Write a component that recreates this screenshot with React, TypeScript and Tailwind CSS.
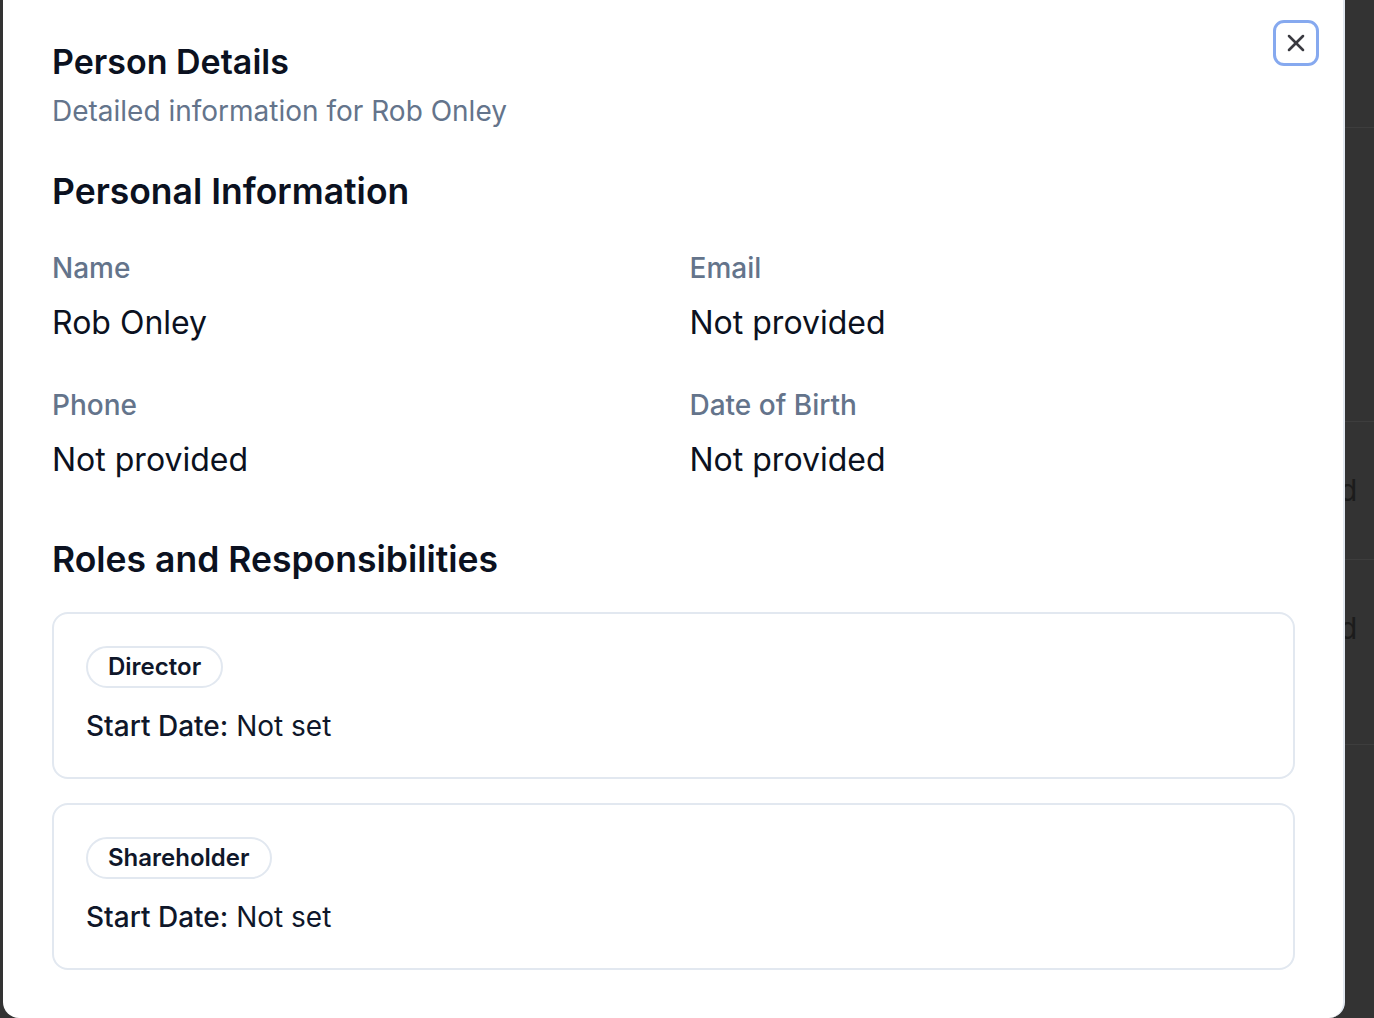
import React from 'react';
import { X } from 'lucide-react';

const info = [
  { label: 'Name', value: 'Rob Onley' },
  { label: 'Email', value: 'Not provided' },
  { label: 'Phone', value: 'Not provided' },
  { label: 'Date of Birth', value: 'Not provided' },
];

const roles = ['Director', 'Shareholder'];

const RoleCard = ({ role }: { role: string }) => (
  <div className="rounded-2xl border-2 border-[#e2e8f0] px-8 pt-8 pb-[33px]">
    <div className="flex">
      <span className="rounded-full border-2 border-[#e2e8f0] px-5 h-[42px] flex items-center text-[24px] font-semibold text-[#0f172a]">
        {role}
      </span>
    </div>
    <p className="mt-5 text-[28px] leading-[36px] text-[#0f172a]">
      <span className="font-medium">Start Date:</span> Not set
    </p>
  </div>
);

export default function App() {
  return (
    <div
      className="flex h-[1018px] w-[1374px] overflow-hidden bg-[#333333]"
      style={{ fontFamily: 'Inter, "Noto Sans", sans-serif' }}
    >
      {/* backdrop edge on the left */}
      <div className="w-[3px] shrink-0" />

      {/* dialog */}
      <div className="relative -mt-4 h-[1034px] w-[1342px] shrink-0 rounded-2xl border-r-2 border-[#e2e8f0] bg-white pl-[49px] pr-[48px] pt-[58px]">
        <button className="absolute left-[1270px] top-[36px] flex h-[46px] w-[46px] items-center justify-center rounded-[11px] border-[3px] border-[#86a9ef] text-[#3a3a40]">
          <X size={28} strokeWidth={2.2} />
        </button>

        <h2 className="text-[34px] leading-[40px] font-semibold text-[#0b1120]">Person Details</h2>
        <p className="mt-[11px] text-[28px] leading-[36px] text-[#64748b]">
          Detailed information for Rob Onley
        </p>

        <h3 className="mt-[41px] text-[35.5px] leading-[44px] font-semibold text-[#0b1120]">
          Personal Information
        </h3>
        <div className="mt-[38px] grid grid-cols-2 gap-x-8 gap-y-[46px]">
          {info.map((f) => (
            <div key={f.label}>
              <p className="text-[28px] leading-[32px] font-medium text-[#64748b]">{f.label}</p>
              <p className="mt-[19px] text-[32px] leading-[40px] text-[#0b1120]">{f.value}</p>
            </div>
          ))}
        </div>

        <h3 className="mt-[58px] text-[35.5px] leading-[44px] font-semibold text-[#0b1120]">
          Roles and Responsibilities
        </h3>
        <div className="mt-[30px] flex flex-col gap-[24px]">
          {roles.map((r) => (
            <RoleCard key={r} role={r} />
          ))}
        </div>
      </div>

      {/* background table seen through the overlay */}
      <div className="flex w-[29px] shrink-0 flex-col overflow-hidden text-[30px] text-[#1c1c1c]">
        <div className="h-[128px] border-b border-[#3d3d3d]" />
        <div className="h-[294px] border-b border-[#3d3d3d]" />
        <div className="flex h-[138px] items-center border-b border-[#3d3d3d]">
          <span className="-ml-[6px]">d</span>
        </div>
        <div className="flex h-[185px] items-start border-b border-[#3d3d3d] pt-[53px]">
          <span className="-ml-[6px] leading-none">d</span>
        </div>
      </div>
    </div>
  );
}
